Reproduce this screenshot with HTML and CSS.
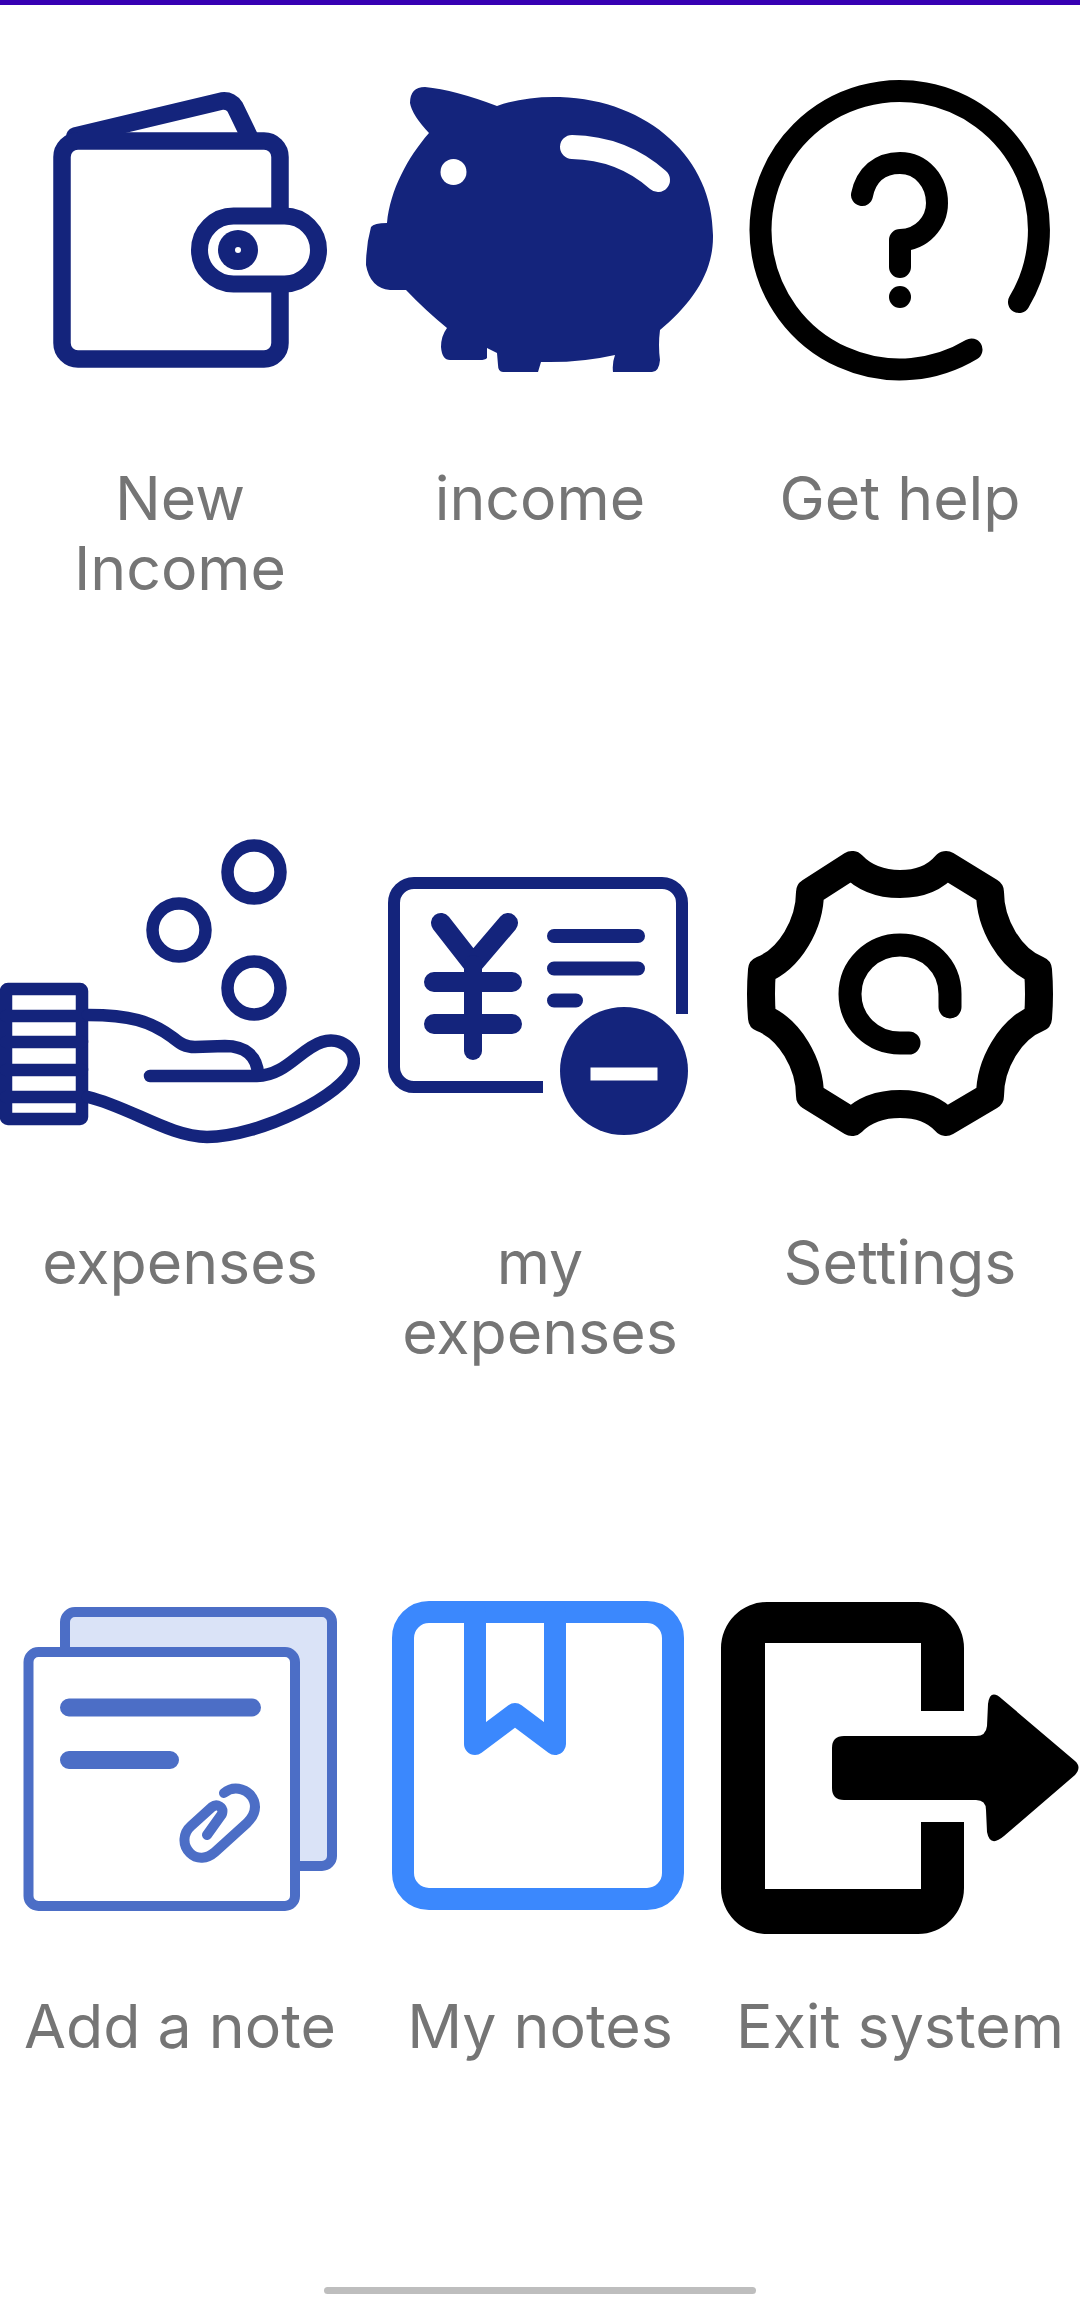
FILE: index.html
```html
<!DOCTYPE html>
<html lang="en">
<head>
    <meta charset="UTF-8">
    <meta name="viewport" content="width=device-width, initial-scale=1.0">
    <title>Home</title>
    <link rel="stylesheet" href="styles.css">
</head>
<body>

<div class="status-line"></div>

<div class="menu">

    <!-- Row 1 -->
    <a class="menu-item">
        <svg class="menu-icon" viewBox="0 0 360 350">
            <g class="line navy" stroke-width="17.5">
                <path d="M75 76 L222 41 Q230 40 235 47 L250 78"/>
                <rect x="62" y="81" width="218" height="218" rx="16"/>
                <rect class="white" x="199.500" y="156" width="119" height="68" rx="34" stroke-width="17"/>
            </g>
            <circle class="navy-fill" cx="238" cy="190" r="20"/>
            <circle class="white-fill" cx="238" cy="190" r="3"/>
        </svg>
        <span class="menu-label">New<br>Income</span>
    </a>

    <a class="menu-item">
        <svg class="menu-icon" viewBox="0 0 360 350">
            <path class="navy-fill" d="M50 43 Q50 27 65 27 Q95 30 137 46 Q165 36 200 37 C290 40 354 100 353 177 C353 215 330 245 300 270 Q298 285 300 300 Q299 312 292 312 H253 Q252 303 255 295 Q220 303 181 302 L178 312 H143 Q138 312 138 305 L137 293 L127 288 L127 298 Q125 300 120 300 H90 Q82 300 81 287 Q81 276 87 268 Q65 250 46 230 H30 Q10 228 6 205 Q6 185 11 167 Q14 163 27 163 C30 130 48 97 69 73 Q52 55 50 43 Z"/>
            <circle class="white-fill" cx="93.500" cy="112" r="13"/>
            <path class="line white-line" stroke-width="24" d="M212 87 Q262 88 298 120"/>
        </svg>
        <span class="menu-label">income</span>
    </a>

    <a class="menu-item">
        <svg class="menu-icon" viewBox="0 0 360 350">
            <g class="line black" stroke-width="22">
                <path d="M299 242 A139.200 139.200 0 1 0 251.500 289.500"/>
                <path d="M142 135 C146 115 160 103 180 103 C202 103 217 122 217 143 C217 162 202 180 180 180 V207"/>
            </g>
            <circle class="black-fill" cx="180" cy="237" r="11"/>
        </svg>
        <span class="menu-label">Get help</span>
    </a>

    <!-- Row 2 -->
    <a class="menu-item">
        <svg class="menu-icon" viewBox="0 0 360 350">
            <g class="line navy" stroke-width="12.500">
                <circle cx="254" cy="48" r="26.500"/>
                <circle cx="179" cy="106" r="26.500"/>
                <circle cx="254" cy="164" r="26.500"/>
                <rect x="6" y="165" width="76" height="130" rx="2"/>
                <path d="M6 192 H82 M6 218 H82 M6 246 H82 M6 273 H82"/>
                <path d="M88 191 C130 191 150 197 172 213 C180 219 184 223 195 223 L225 222 C245 222 257 232 258 250"/>
                <path d="M150 252 H257 C285 252 300 225 322 218 C340 212 358 225 353 243 C345 270 260 313 207 313 C170 313 130 283 88 273"/>
            </g>
        </svg>
        <span class="menu-label">expenses</span>
    </a>

    <a class="menu-item">
        <svg class="menu-icon" viewBox="0 0 360 350">
            <g class="line navy">
                <path stroke-width="12" stroke-linecap="butt" d="M183 263 H54 a20 20 0 0 1 -20 -20 V79 a20 20 0 0 1 20 -20 H302 a20 20 0 0 1 20 20 V190"/>
                <path stroke-width="20" d="M81 99 L113 140 L148 99"/>
                <path stroke-width="18" d="M113 140 V227"/>
                <path stroke-width="20" d="M74 158 H152 M74 200 H152"/>
                <path stroke-width="14" d="M194 112 H278 M194 144.500 H278 M194 176.500 H216"/>
            </g>
            <circle class="navy-fill" cx="264" cy="247" r="64"/>
            <rect class="white-fill" x="230.500" y="243.500" width="67" height="13"/>
        </svg>
        <span class="menu-label">my<br>expenses</span>
    </a>

    <a class="menu-item">
        <svg class="menu-icon" viewBox="0 0 360 350">
            <path class="line black" stroke-width="28" d="M132 41 Q150 60 180 60 Q210 60 226 41 L270 68 C270 100 290 135 318 146 Q320 170 318 194 C290 205 270 240 270 272 L226 298 Q210 280 180 280 Q150 280 132 298 L90 272 C90 240 70 205 42 194 Q40 170 42 146 C70 135 90 100 90 68 Z"/>
            <path class="line black" stroke-width="23" d="M230 183 V170 C230 142 208 121 180 121 C152 121 130 143 130 170 C130 197 152 219 180 219 H189"/>
        </svg>
        <span class="menu-label">Settings</span>
    </a>

    <!-- Row 3 -->
    <a class="menu-item">
        <svg class="menu-icon" viewBox="0 0 360 350">
            <g class="line periwinkle" stroke-width="10">
                <rect class="pale" x="65" y="24" width="267" height="254" rx="10"/>
                <rect class="white" x="28.500" y="64" width="266.500" height="254" rx="10"/>
                <path stroke-width="18" d="M69 119.500 H252 M69 172 H170"/>
                <path d="M224 205 C235 196 250 202 254 213 C257 222 253 229 247 235 L215 264 C207 271 197 272 190 265 C182 257 183 245 191 238 L212 219 C217 215 224 219 222 226 L207 247"/>
            </g>
        </svg>
        <span class="menu-label">Add a note</span>
    </a>

    <a class="menu-item">
        <svg class="menu-icon" viewBox="0 0 360 350">
            <g class="line blue" stroke-width="22">
                <rect x="43" y="24" width="270" height="287" rx="26"/>
                <path d="M115 24 V156 L155 126 L195 156 V24"/>
            </g>
        </svg>
        <span class="menu-label">My notes</span>
    </a>

    <a class="menu-item">
        <svg class="menu-icon" viewBox="0 0 360 350">
            <path class="black-fill" d="M244 123 V60 A46 46 0 0 0 198 14 H47 A46 46 0 0 0 1 60 V300 A46 46 0 0 0 47 346 H198 A46 46 0 0 0 244 300 V234 H201 V301 H45 V55 H201 V123 Z"/>
            <path class="black-fill" d="M124 148 H256 Q266 148 267 138 L268 116 Q270 100 282 111 L355 173 Q362 179 355 187 L284 248 Q270 260 267 244 L266 222 Q266 212 256 212 H124 Q112 212 112 200 V160 Q112 148 124 148 Z"/>
        </svg>
        <span class="menu-label">Exit system</span>
    </a>

</div>

<div class="home-bar"></div>

</body>
</html>
```

FILE: styles.css
```css
body {
    margin: 0;
    height: 2297px;
    overflow: hidden;
    background-color: white;
    font-family: Inter, "Liberation Sans", sans-serif;
    display: flex;
    flex-direction: column;
    align-items: center;
}

.status-line {
    width: 100%;
    height: 5px;
    background-color: #3700b3;
    flex-shrink: 0;
}

.menu {
    flex: 1;
    min-height: 0;
    width: 100%;
    padding-top: 55px;
    display: grid;
    grid-template-columns: repeat(3, 360px);
    grid-auto-rows: 764px;
}

.menu-item {
    display: flex;
    flex-direction: column;
    align-items: center;
}

.menu-icon {
    display: block;
    width: 360px;
    height: 350px;
    flex-shrink: 0;
}

.menu-label {
    margin-top: 53px;
    font-size: 60.8px;
    line-height: 70px;
    text-align: center;
    color: #757575;
    white-space: nowrap;
}

.home-bar {
    width: 432px;
    height: 7px;
    margin-bottom: 3px;
    border-radius: 4px;
    background-color: #bebebe;
    flex-shrink: 0;
}

/* Icon strokes */
.line {
    fill: none;
    stroke-linecap: round;
    stroke-linejoin: round;
}

.navy { stroke: #14247c; }
.black { stroke: #000; }
.periwinkle { stroke: #4c6ec6; }
.blue { stroke: #3b88fd; }
.white-line { stroke: #fff; }

.white { fill: #fff; }
.pale { fill: #dae3f7; }

.navy-fill { fill: #14247c; }
.black-fill { fill: #000; }
.white-fill { fill: #fff; }
```
